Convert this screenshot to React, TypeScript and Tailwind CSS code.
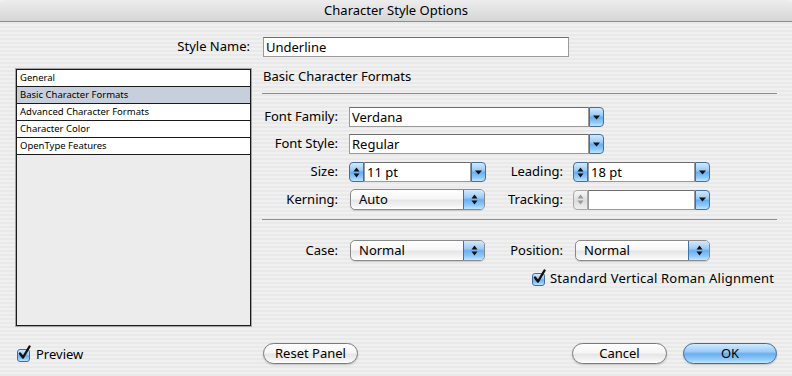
import React from 'react';

const FONT = '"Noto Sans", "DejaVu Sans", sans-serif';

// aqua blue gradient used by arrows, steppers, checkboxes and default button
const BLUE =
  'bg-[linear-gradient(to_bottom,#d3e9fd_0%,#9ccbf5_40%,#6aaef0_52%,#8ec9fa_80%,#c2e6ff_100%)]';
const WHITE =
  'bg-[linear-gradient(to_bottom,#ffffff_0%,#f6f6f6_45%,#e6e6e6_55%,#f4f4f4_85%,#ffffff_100%)]';

function DownArrow() {
  return (
    <svg width="7" height="5" viewBox="0 0 7 5">
      <path d="M0 0.5H7L3.5 4.5Z" fill="#111" />
    </svg>
  );
}

function UpDown({ color = '#111' }: { color?: string }) {
  return (
    <svg width="7" height="11" viewBox="0 0 7 11">
      <path d="M0.5 4.5H6.5L3.5 0.5Z" fill={color} />
      <path d="M0.5 6.5H6.5L3.5 10.5Z" fill={color} />
    </svg>
  );
}

function Check({ size = 15 }: { size?: number }) {
  return (
    <div className="relative" style={{ width: size, height: size }}>
      <div
        className={`absolute left-0 bottom-0 w-[13px] h-[13px] rounded-[3px] border border-[#3f6ca8] ${BLUE}`}
      />
      <svg className="absolute left-[1px] top-[-2px]" width="14" height="15" viewBox="0 0 14 15">
        <path
          d="M2 8.5L5 12.5L11.5 1.5"
          stroke="#111"
          strokeWidth="2.4"
          fill="none"
          strokeLinecap="round"
          strokeLinejoin="round"
        />
      </svg>
    </div>
  );
}

function Combo({ value, w }: { value: string; w: string }) {
  return (
    <div className={`flex h-[20px] ${w}`}>
      <div className="flex-1 bg-white border border-[#9a9a9a] border-t-[#6e6e6e] pl-[2px] text-[13px] leading-[18px]">
        {value}
      </div>
      <div
        className={`w-[15px] flex items-center justify-center rounded-r-[4px] border border-[#44709f] ${BLUE}`}
      >
        <DownArrow />
      </div>
    </div>
  );
}

function Stepper({ value, disabled = false }: { value: string; disabled?: boolean }) {
  return (
    <div className="flex h-[20px] w-[137px]">
      <div
        className={`w-[15px] flex items-center justify-center rounded-l-[4px] border ${
          disabled
            ? 'border-[#a9a9a9] bg-[linear-gradient(to_bottom,#f7f7f7,#dcdcdc_55%,#efefef)]'
            : `border-[#44709f] ${BLUE}`
        }`}
      >
        <UpDown color={disabled ? '#9a9a9a' : '#111'} />
      </div>
      <div className="flex-1 bg-white border border-[#9a9a9a] border-t-[#6e6e6e] pl-[2px] text-[13px] leading-[18px]">
        {value}
      </div>
      <div
        className={`w-[15px] flex items-center justify-center rounded-r-[4px] border border-[#44709f] ${BLUE}`}
      >
        <DownArrow />
      </div>
    </div>
  );
}

function Popup({ value }: { value: string }) {
  return (
    <div
      className={`flex h-[21px] w-[135px] rounded-[5px] border border-[#8a8a8a] overflow-hidden shadow-[0_1px_1px_rgba(0,0,0,0.15)] ${WHITE}`}
    >
      <div className="flex-1 pl-[8px] text-[13px] leading-[19px]">{value}</div>
      <div
        className={`w-[21px] flex items-center justify-center border-l border-[#44709f] ${BLUE}`}
      >
        <UpDown />
      </div>
    </div>
  );
}

function Button({ label, w, primary = false }: { label: string; w: string; primary?: boolean }) {
  return (
    <div
      className={`${w} h-[21px] rounded-full border text-center text-[13px] leading-[19px] shadow-[0_1px_2px_rgba(0,0,0,0.2)] ${
        primary ? `border-[#3c6aa3] ${BLUE}` : `border-[#7a7a7a] ${WHITE}`
      }`}
    >
      {label}
    </div>
  );
}

const items = [
  'General',
  'Basic Character Formats',
  'Advanced Character Formats',
  'Character Color',
  'OpenType Features',
];

export default function App() {
  return (
    <div
      className="w-[792px] h-[376px] overflow-hidden text-black bg-[repeating-linear-gradient(to_bottom,#f0f0f0_0px,#f0f0f0_2px,#e9e9e9_2px,#e9e9e9_4px)]"
      style={{ fontFamily: FONT }}
    >
      {/* Title bar */}
      <div className="h-[22px] border-b border-[#8c8c8c] rounded-t-[5px] bg-[linear-gradient(to_bottom,#ededed,#d6d6d6)] text-center text-[13px] leading-[21px]">
        Character Style Options
      </div>

      {/* Style name */}
      <div className="flex items-center pt-[15px]">
        <div className="w-[250px] text-right text-[13px]">Style Name:</div>
        <div className="ml-[13px] w-[306px] h-[20px] bg-white border border-[#9a9a9a] border-t-[#6e6e6e] pl-[2px] text-[13px] leading-[18px]">
          Underline
        </div>
      </div>

      <div className="flex mt-[11px]">
        {/* Panel list */}
        <div className="ml-[15px] w-[237px] h-[259px] border border-[#a5a5a5]">
          <div className="h-full border border-[#1a1a1a] bg-[#ececec]">
            {items.map((it, i) => (
              <div
                key={it}
                className={`h-[17px] border-b border-[#1a1a1a] pl-[3px] text-[9.5px] leading-[16px] ${
                  i === 1 ? 'bg-[#c6cfdb]' : 'bg-white'
                }`}
              >
                {it}
              </div>
            ))}
          </div>
        </div>

        {/* Right panel */}
        <div className="ml-[10px] flex flex-col text-[13px]">
          <div className="h-[16px] leading-[16px] pl-[1px]">Basic Character Formats</div>
          <div className="mt-[9px] w-[515px] h-px bg-[#8e8e8e]" />

          <div className="mt-[13px] flex items-center">
            <div className="w-[76px] text-right">Font Family:</div>
            <div className="ml-[11px]">
              <Combo value="Verdana" w="w-[255px]" />
            </div>
          </div>
          <div className="mt-[7px] flex items-center">
            <div className="w-[76px] text-right">Font Style:</div>
            <div className="ml-[11px]">
              <Combo value="Regular" w="w-[255px]" />
            </div>
          </div>

          <div className="mt-[8px] flex items-center">
            <div className="w-[76px] text-right">Size:</div>
            <div className="ml-[11px]">
              <Stepper value="11 pt" />
            </div>
            <div className="w-[77px] text-right">Leading:</div>
            <div className="ml-[10px]">
              <Stepper value="18 pt" />
            </div>
          </div>
          <div className="mt-[7px] flex items-center">
            <div className="w-[76px] text-right">Kerning:</div>
            <div className="ml-[12px]">
              <Popup value="Auto" />
            </div>
            <div className="w-[78px] text-right">Tracking:</div>
            <div className="ml-[10px]">
              <Stepper value="" disabled />
            </div>
          </div>

          <div className="mt-[9px] w-[515px] h-px bg-[#8e8e8e]" />

          <div className="mt-[20px] flex items-center">
            <div className="w-[76px] text-right">Case:</div>
            <div className="ml-[12px]">
              <Popup value="Normal" />
            </div>
            <div className="w-[78px] text-right">Position:</div>
            <div className="ml-[12px]">
              <Popup value="Normal" />
            </div>
          </div>
          <div className="mt-[8px] flex items-center pl-[270px]">
            <Check />
            <span className="ml-[3px] tracking-[0.2px]">Standard Vertical Roman Alignment</span>
          </div>
        </div>
      </div>

      {/* Bottom row */}
      <div className="mt-[15px] flex items-center text-[13px]">
        <div className="w-[263px] pl-[17px] flex items-center pt-[3px]">
          <Check />
          <span className="ml-[4px]">Preview</span>
        </div>
        <Button label="Reset Panel" w="w-[95px]" />
        <div className="ml-[214px]">
          <Button label="Cancel" w="w-[95px]" />
        </div>
        <div className="ml-[16px]">
          <Button label="OK" w="w-[94px]" primary />
        </div>
      </div>
    </div>
  );
}
